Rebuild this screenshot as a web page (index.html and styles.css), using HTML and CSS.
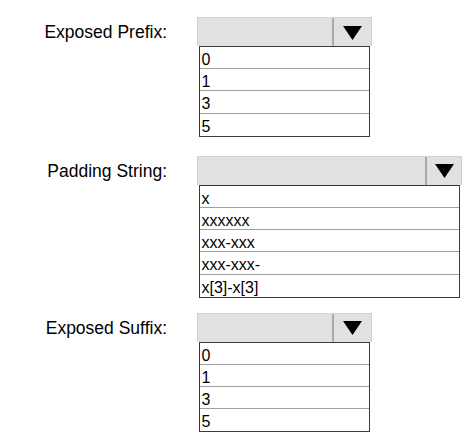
FILE: index.html
```html
<!DOCTYPE html>
<html>
<head>
<meta charset="utf-8">
<link rel="stylesheet" href="styles.css">
</head>
<body>
<div class="form">
  <div class="field field-prefix">
    <div class="label">Exposed Prefix:</div>
    <div class="dropdown dropdown-narrow">
      <div class="select">
        <div class="value"></div>
        <div class="btn"><svg class="arrow" viewBox="0 0 19 14" width="19" height="14"><polygon points="0,0 19,0 9.5,14" fill="#000"/></svg></div>
      </div>
      <ul class="options">
        <li>0</li>
        <li>1</li>
        <li>3</li>
        <li>5</li>
      </ul>
    </div>
  </div>

  <div class="field field-padding">
    <div class="label">Padding String:</div>
    <div class="dropdown dropdown-wide">
      <div class="select">
        <div class="value"></div>
        <div class="btn"><svg class="arrow" viewBox="0 0 19 14" width="19" height="14"><polygon points="0,0 19,0 9.5,14" fill="#000"/></svg></div>
      </div>
      <ul class="options">
        <li>x</li>
        <li>xxxxxx</li>
        <li>xxx-xxx</li>
        <li>xxx-xxx-</li>
        <li>x[3]-x[3]</li>
      </ul>
    </div>
  </div>

  <div class="field field-suffix">
    <div class="label">Exposed Suffix:</div>
    <div class="dropdown dropdown-narrow">
      <div class="select">
        <div class="value"></div>
        <div class="btn"><svg class="arrow" viewBox="0 0 19 14" width="19" height="14"><polygon points="0,0 19,0 9.5,14" fill="#000"/></svg></div>
      </div>
      <ul class="options">
        <li>0</li>
        <li>1</li>
        <li>3</li>
        <li>5</li>
      </ul>
    </div>
  </div>
</div>
</body>
</html>
```

FILE: styles.css
```css
html, body {
  margin: 0;
  padding: 0;
  background: #ffffff;
}

body {
  font-family: "Liberation Sans", Arial, sans-serif;
  color: #000;
}

.form {
  display: flex;
  flex-direction: column;
  padding-top: 17px;
}

.field {
  display: flex;
  align-items: flex-start;
}

.field-padding {
  margin-top: 19px;
}

.field-suffix {
  margin-top: 15px;
}

.label {
  width: 167px;
  text-align: right;
  font-size: 17.5px;
  line-height: 29px;
  padding-top: 1px;
  box-sizing: border-box;
  margin-right: 30px;
  white-space: nowrap;
}

.dropdown {
  display: flex;
  flex-direction: column;
}

.dropdown-narrow {
  width: 175px;
}

.dropdown-wide {
  width: 265px;
}

.select {
  display: flex;
  height: 29px;
  box-sizing: border-box;
  background: #e1e1e1;
  border: 1px solid #d2d2d2;
  border-bottom: none;
}

.value {
  flex: 1;
}

.btn {
  display: flex;
  align-items: center;
  justify-content: center;
  border-left: 2px solid #a8a8a8;
  box-sizing: border-box;
}

.dropdown-narrow .btn {
  width: 39px;
}

.dropdown-wide .btn {
  width: 36px;
}

.arrow {
  display: block;
  margin-top: 1px;
}

.options {
  list-style: none;
  margin: 0 2px 0 1.5px;
  padding: 0;
  border: 1px solid #3a3a3a;
  background: #fff;
}

.options li {
  height: 22.2px;
  box-sizing: border-box;
  padding: 3px 0 0 2px;
  font-size: 16px;
  line-height: 20px;
  border-bottom: 1px solid #a0a0a0;
  overflow: hidden;
  white-space: nowrap;
}

.options li:last-child {
  border-bottom: none;
}
```
